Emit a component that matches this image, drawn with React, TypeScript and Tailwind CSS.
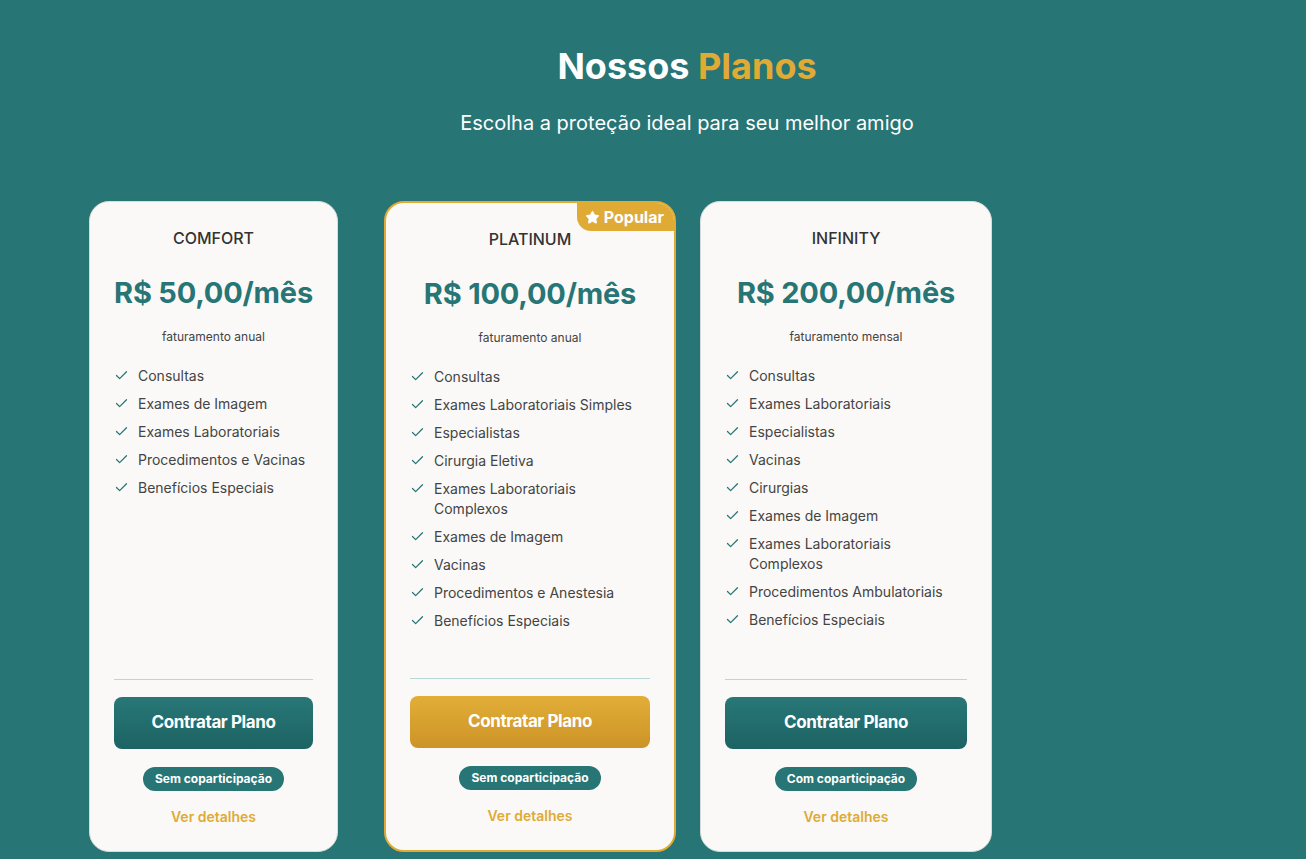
import React from 'react';
import { Check, Star } from 'lucide-react';

interface Plan {
  name: string;
  price: string;
  billing: string;
  features: string[];
  badge: string;
  popular?: boolean;
  width: string;
}

const plans: Plan[] = [
  {
    name: 'COMFORT',
    price: 'R$ 50,00/mês',
    billing: 'faturamento anual',
    features: ['Consultas', 'Exames de Imagem', 'Exames Laboratoriais', 'Procedimentos e Vacinas', 'Benefícios Especiais'],
    badge: 'Sem coparticipação',
    width: 'w-[249px] mr-[46px]',
  },
  {
    name: 'PLATINUM',
    price: 'R$ 100,00/mês',
    billing: 'faturamento anual',
    features: [
      'Consultas',
      'Exames Laboratoriais Simples',
      'Especialistas',
      'Cirurgia Eletiva',
      'Exames Laboratoriais Complexos',
      'Exames de Imagem',
      'Vacinas',
      'Procedimentos e Anestesia',
      'Benefícios Especiais',
    ],
    badge: 'Sem coparticipação',
    popular: true,
    width: 'w-[292px] mr-[24px]',
  },
  {
    name: 'INFINITY',
    price: 'R$ 200,00/mês',
    billing: 'faturamento mensal',
    features: [
      'Consultas',
      'Exames Laboratoriais',
      'Especialistas',
      'Vacinas',
      'Cirurgias',
      'Exames de Imagem',
      'Exames Laboratoriais Complexos',
      'Procedimentos Ambulatoriais',
      'Benefícios Especiais',
    ],
    badge: 'Com coparticipação',
    width: 'w-[292px]',
  },
];

function PlanCard({ plan }: { plan: Plan }) {
  return (
    <div
      className={`relative flex flex-col rounded-[20px] bg-[#faf9f7] px-6 pt-6 pb-6 overflow-hidden ${plan.width} ${
        plan.popular ? 'border-2 border-[#e0ab35]' : 'border border-[#d6dcdc]'
      }`}
    >
      {plan.popular && (
        <div className="absolute top-0 right-0 flex items-center gap-1 bg-[#e0ab35] pl-2 pr-[10px] h-[28px] rounded-bl-[14px] text-white text-base font-bold">
          <Star size={15} fill="white" strokeWidth={1.5} />
          Popular
        </div>
      )}
      <h3 className="text-center text-base font-medium text-[#333] leading-6">{plan.name}</h3>
      <div className="mt-[25px] text-center text-[29px] font-bold text-[#277575] leading-9 tracking-[-0.2px]">{plan.price}</div>
      <p className="mt-[18px] text-center text-xs text-[#444] leading-4">{plan.billing}</p>
      <ul className="mt-[21px] flex flex-col gap-2">
        {plan.features.map((f) => (
          <li key={f} className="flex items-start gap-[9px] text-sm leading-5 text-[#444]">
            <Check size={15} strokeWidth={2} className="mt-[2px] shrink-0 text-[#277575]" />
            <span>{f}</span>
          </li>
        ))}
      </ul>
      <div className="mt-auto border-t border-[#b7d8d6] pt-[17px]">
        <button
          className={`w-full h-[52px] rounded-lg text-white text-[17px] font-bold tracking-[-0.4px] ${
            plan.popular
              ? 'bg-gradient-to-b from-[#e2ae37] to-[#cc9427]'
              : 'bg-gradient-to-b from-[#287777] to-[#1d6363]'
          }`}
        >
          Contratar Plano
        </button>
        <div className="mt-[18px] flex justify-center">
          <span className="rounded-full bg-[#277575] px-3 h-6 flex items-center text-xs font-bold text-white">{plan.badge}</span>
        </div>
        <div className="mt-4 text-center text-sm font-semibold leading-5 text-[#e0ab35]">Ver detalhes</div>
      </div>
    </div>
  );
}

export default function App() {
  return (
    <div className="min-h-[859px] bg-[#277575] font-['Inter',sans-serif]">
      <div className="pl-[68px] pt-[44px] text-center">
        <h2 className="text-4xl font-bold leading-[44px] text-white">
          Nossos <span className="text-[#e0ab35]">Planos</span>
        </h2>
        <p className="mt-[21px] text-xl leading-7 text-white">Escolha a proteção ideal para seu melhor amigo</p>
      </div>
      <div className="mt-[64px] flex pl-[89px] h-[651px]">
        {plans.map((p) => (
          <PlanCard key={p.name} plan={p} />
        ))}
      </div>
    </div>
  );
}
